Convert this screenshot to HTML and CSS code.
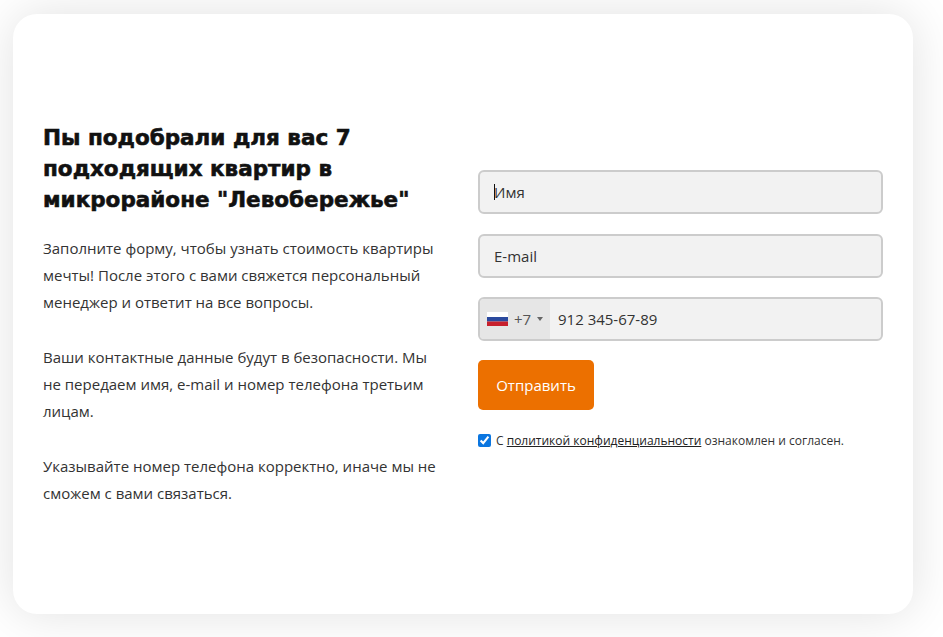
FILE: index.html
```html
<!DOCTYPE html>
<html lang="ru">
<head>
    <meta charset="UTF-8">
    <meta name="viewport" content="width=device-width, initial-scale=1.0">
    <title>Подбор квартир</title>
    <link rel="stylesheet" href="styles.css">
</head>
<body>

<div class="card">
    <div class="info">
        <h2>Пы подобрали для вас 7 подходящих квартир в микрорайоне "Левобережье"</h2>
        <p>Заполните форму, чтобы узнать стоимость квартиры мечты! После этого с вами свяжется персональный менеджер и ответит на все вопросы.</p>
        <p>Ваши контактные данные будут в безопасности. Мы не передаем имя, e-mail и номер телефона третьим лицам.</p>
        <p>Указывайте номер телефона корректно, иначе мы не сможем с вами связаться.</p>
    </div>

    <form class="lead-form">
        <div class="input-field">
            <span class="caret"></span>
            <input type="text" placeholder="Имя">
        </div>
        <div class="input-field">
            <input type="email" placeholder="E-mail">
        </div>
        <div class="input-field phone-field">
            <div class="country">
                <svg class="flag" width="21" height="14" viewBox="0 0 21 14">
                    <rect width="21" height="5" fill="#fff"/>
                    <rect y="5" width="21" height="4.5" fill="#2b4a9e"/>
                    <rect y="9.5" width="21" height="4.5" fill="#c8202d"/>
                </svg>
                <span class="code">+7</span>
                <span class="arrow"></span>
            </div>
            <input type="tel" placeholder="912 345-67-89">
        </div>
        <button type="button" class="button">Отправить</button>
        <label class="agree">
            <input type="checkbox" checked>
            <span>С <a href="#">политикой конфиденциальности</a> ознакомлен и согласен.</span>
        </label>
    </form>
</div>

</body>
</html>
```

FILE: styles.css
```css
* {
    box-sizing: border-box;
}
body {
    font-family: "Open Sans", "Noto Sans", sans-serif;
    margin: 0;
    padding: 14px 30px 23px 13px;
    background-color: #fff;
    color: #222;
}
.card {
    width: 900px;
    height: 600px;
    padding: 0 30px;
    display: grid;
    grid-template-columns: 405px 405px;
    column-gap: 30px;
    border-radius: 24px;
    background-color: #fff;
    box-shadow: 0 0 50px rgba(0, 0, 0, 0.12);
}
.info {
    padding-top: 108px;
}
.info h2 {
    margin: 0 0 20px;
    font-family: "DejaVu Sans", sans-serif;
    font-size: 21.5px;
    font-weight: 700;
    line-height: 31px;
    color: #111;
    -webkit-text-stroke: 0.6px #111;
}
.info p {
    margin: 0 0 28px;
    font-size: 15px;
    line-height: 27px;
    color: #333;
}
.lead-form {
    padding-top: 156px;
}
.input-field {
    position: relative;
    display: flex;
    height: 44px;
    margin-bottom: 20px;
    border: 2px solid #ccc;
    border-radius: 6px;
    background-color: #f2f2f2;
    overflow: hidden;
}
.input-field + .input-field {
    margin-bottom: 19px;
}
.input-field input {
    flex: 1;
    min-width: 0;
    padding: 0 14px;
    border: none;
    outline: none;
    background: transparent;
    font-family: inherit;
    font-size: 15px;
}
.input-field input::placeholder {
    color: #333;
    opacity: 1;
}
.caret {
    position: absolute;
    left: 14px;
    top: 12px;
    width: 1px;
    height: 16px;
    background-color: #111;
}
.country {
    display: flex;
    align-items: center;
    width: 70px;
    padding-left: 7px;
    background-color: #e6e6e6;
    font-size: 15px;
    color: #555;
}
.code {
    margin-left: 6px;
}
.arrow {
    margin-left: 6px;
    border-left: 3px solid transparent;
    border-right: 3px solid transparent;
    border-top: 4px solid #666;
}
.phone-field input {
    padding-left: 8px;
}
.button {
    display: block;
    width: 116px;
    height: 50px;
    padding: 0;
    border: none;
    border-radius: 5px;
    background-color: #ec7000;
    color: #fff;
    font-family: inherit;
    font-size: 15px;
    cursor: pointer;
}
.agree {
    display: flex;
    align-items: center;
    margin-top: 22px;
    font-size: 12px;
    color: #333;
}
.agree input {
    width: 13px;
    height: 13px;
    margin: 0 5px 0 0;
    accent-color: #0b76e0;
}
.agree a {
    color: #222;
}
```
